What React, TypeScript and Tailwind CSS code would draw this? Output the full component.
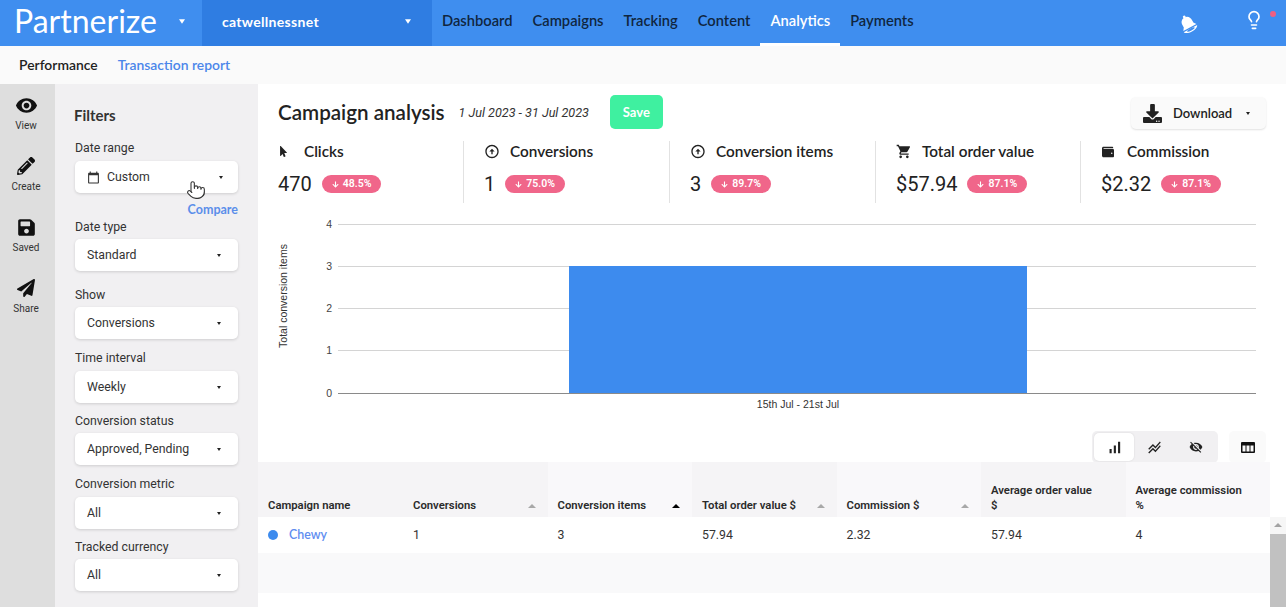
import React from 'react';
import { FaArrowDown, FaDownload, FaMousePointer, FaPaperPlane, FaPencilAlt, FaSave, FaWallet } from 'react-icons/fa';
import {
  MdCalendarToday,
  MdOutlineArrowCircleUp,
  MdShoppingCart,
  MdSignalCellularAlt,
  MdStackedLineChart,
  MdVisibility,
  MdVisibilityOff,
} from 'react-icons/md';
import { Lightbulb, Pointer } from 'lucide-react';

const quick = "font-['Lato',sans-serif]";

const navItems = ['Dashboard', 'Campaigns', 'Tracking', 'Content', 'Analytics', 'Payments'];

const Caret = ({ className = '' }: { className?: string }) => (
  <span className={`inline-block w-0 h-0 border-x-[2.5px] border-x-transparent border-t-[3.5px] border-t-current ${className}`} />
);

const railItems = [
  { label: 'View', icon: <MdVisibility size={23} /> },
  { label: 'Create', icon: <FaPencilAlt size={18} /> },
  { label: 'Saved', icon: <FaSave size={19} /> },
  { label: 'Share', icon: <FaPaperPlane size={18} /> },
];

const filters = [
  { label: 'Date type', value: 'Standard', wrap: '-mt-px', box: 'mt-[2px]' },
  { label: 'Show', value: 'Conversions', wrap: 'mt-[14px]', box: 'mt-[2px]' },
  { label: 'Time interval', value: 'Weekly', wrap: 'mt-[9px]', box: 'mt-[3px]' },
  { label: 'Conversion status', value: 'Approved, Pending', wrap: 'mt-[8px]', box: 'mt-[2px]' },
  { label: 'Conversion metric', value: 'All', wrap: 'mt-[9px]', box: 'mt-[3px]' },
  { label: 'Tracked currency', value: 'All', wrap: 'mt-[8px]', box: 'mt-[2px]' },
];

const stats = [
  { title: 'Clicks', value: '470', delta: '48.5%', icon: <FaMousePointer size={11} />, cell: 'w-[186px] pr-0', gap: 'gap-[15px]', iconW: 'w-[11px]' },
  { title: 'Conversions', value: '1', delta: '75.0%', icon: <MdOutlineArrowCircleUp size={17} />, cell: 'w-[206px] pl-[20px]', gap: 'gap-[10px]', iconW: 'w-[16px]' },
  { title: 'Conversion items', value: '3', delta: '89.7%', icon: <MdOutlineArrowCircleUp size={17} />, cell: 'w-[206px] pl-[20px]', gap: 'gap-[10px]', iconW: 'w-[16px]' },
  { title: 'Total order value', value: '$57.94', delta: '87.1%', icon: <MdShoppingCart size={17} />, cell: 'w-[205px] pl-[20px]', gap: 'gap-[10px]', iconW: 'w-[16px]' },
  { title: 'Commission', value: '$2.32', delta: '87.1%', icon: <FaWallet size={12} />, cell: 'w-[185px] pl-[20px] border-r-0', gap: 'gap-[12px]', iconW: 'w-[14px]' },
];

const columns = [
  { name: 'Conversions', bg: 'bg-[#f5f4f6]', sort: 'text-[#a8a8a8]', pad: 'pr-[10px]' },
  { name: 'Conversion items', bg: 'bg-[#f9f8fa]', sort: 'text-black', pad: 'pr-[10px]' },
  { name: 'Total order value $', bg: 'bg-[#f5f4f6]', sort: 'text-[#a8a8a8]', pad: 'pr-[10px]' },
  { name: 'Commission $', bg: 'bg-[#f9f8fa]', sort: 'text-[#a8a8a8]', pad: 'pr-[10px]' },
  { name: 'Average order value $', bg: 'bg-[#f5f4f6]', sort: '', pad: 'pr-[30px]' },
  { name: 'Average commission %', bg: 'bg-[#f9f8fa]', sort: '', pad: 'pr-[20px]' },
];

const rowValues = ['1', '3', '57.94', '2.32', '57.94', '4'];

const Select = ({ value, icon, caret = 'mr-[2px]' }: { value: string; icon?: React.ReactNode; caret?: string }) => (
  <div className="flex items-center h-[32px] w-[163px] rounded-[5px] bg-white pl-[12px] pr-[15px] text-[12.3px] text-[#333] shadow-[0_1px_3px_rgba(0,0,0,0.15)]">
    {icon}
    <span className="flex-1">{value}</span>
    <Caret className={`text-[#222] ${caret}`} />
  </div>
);

const TableIcon = () => (
  <svg width="14" height="11" viewBox="0 0 14 11">
    <rect x="0" y="0" width="14" height="11" rx="1" fill="#111" />
    <rect x="1.5" y="3.5" width="3" height="6" fill="#fafafa" />
    <rect x="5.5" y="3.5" width="3" height="6" fill="#fafafa" />
    <rect x="9.5" y="3.5" width="3" height="6" fill="#fafafa" />
  </svg>
);

// sino inclinado, com o aro separado embaixo
const BellIcon = () => (
  <svg width="20" height="20" viewBox="0 0 20 20" fill="white" className="mr-[46px] mt-[2px]">
    <g transform="rotate(-28 10 10)">
      <circle cx="10" cy="2" r="1.4" />
      <path d="M10 2.5c-3.6 0-5.4 2.7-5.4 5.8v2.9L2.6 14h14.8l-2-2.8V8.3c0-3.1-1.8-5.8-5.4-5.8z" />
      <path d="M2.4 15.2h15.2c-.5 1.9-3.6 3.3-7.6 3.3s-7.1-1.4-7.6-3.3z" />
      <ellipse cx="10" cy="16.2" rx="4.2" ry="1.1" fill="#3f8eef" />
    </g>
  </svg>
);

const Chart = () => {
  const ys = [
    { label: '4', y: 224 },
    { label: '3', y: 266 },
    { label: '2', y: 308 },
    { label: '1', y: 350 },
    { label: '0', y: 393 },
  ];
  return (
    <svg width="1028" height="200" viewBox="258 215 1028 200" className="block font-['Liberation_Sans',sans-serif]">
      {ys.map((t) => (
        <g key={t.label}>
          <line x1="338" x2="1256" y1={t.y + 0.5} y2={t.y + 0.5} stroke={t.label === '0' ? '#8a8a8a' : '#d4d4d4'} />
          <text x="332" y={t.y + 4} textAnchor="end" fontSize="10.5" fill="#444">{t.label}</text>
        </g>
      ))}
      <rect x="569" y="266" width="458" height="127" fill="#3d8bee" />
      <text x="798" y="408" textAnchor="middle" fontSize="10.5" fill="#333">15th Jul - 21st Jul</text>
      <text transform="translate(287 296) rotate(-90)" textAnchor="middle" fontSize="10.5" fill="#333">Total conversion items</text>
    </svg>
  );
};

export default function App() {
  return (
    <div className="h-[607px] w-[1286px] overflow-hidden bg-white font-['Roboto',sans-serif] text-[#222]">
      {/* Barra superior */}
      <header className={`flex h-[46px] bg-[#3f8eef] text-white ${quick}`}>
        <div className="flex w-[202px] items-center pb-[4px] pl-[14px]">
          <span className="text-[32px] font-normal leading-none">Partnerize</span>
          <Caret className="ml-auto mr-[18px] scale-150" />
        </div>
        <div className="flex w-[230px] items-center bg-[#2f7de2] pb-[4px] pl-[20px] pr-[22px] text-[14px] font-bold tracking-[0.3px]">
          <span className="flex-1">catwellnessnet</span>
          <Caret className="scale-150" />
        </div>
        <nav className="flex text-[14.7px] font-semibold">
          {navItems.map((n) => (
            <div
              key={n}
              className={`flex items-center px-[10px] ${n === 'Analytics' ? 'border-b-[3px] border-white pb-[2px] text-white' : 'pb-[5px] text-[#10263f]'}`}
            >
              {n}
            </div>
          ))}
        </nav>
        <div className="ml-auto flex items-center pr-[16px]">
          <BellIcon />
          <div className="relative mb-[6px] mr-[6px]">
            <Lightbulb size={20} />
            <span className="absolute -right-[12px] top-[1px] h-[6px] w-[6px] rounded-full bg-[#ef5f82]" />
          </div>
        </div>
      </header>

      {/* Sub navegação */}
      <div className={`flex h-[38px] items-center gap-[20px] bg-[#fafafa] pl-[19px] text-[13.9px] font-semibold ${quick}`}>
        <span className="text-[#222]">Performance</span>
        <span className="text-[#4b86ea]">Transaction report</span>
      </div>

      <div className="flex h-[523px]">
        {/* Trilho lateral */}
        <aside className="w-[55px] shrink-0 bg-[#dedede] pt-[9px]">
          <div className="flex flex-col items-center gap-[21px] pr-[3px]">
            {railItems.map((r) => (
              <div key={r.label} className="flex h-[40px] flex-col items-center justify-between text-[10px] text-[#333]">
                <span className="flex h-[24px] items-center text-[#111]">{r.icon}</span>
                <span>{r.label}</span>
              </div>
            ))}
          </div>
        </aside>

        {/* Filtros */}
        <aside className="w-[203px] shrink-0 bg-[#f1f0f2] pl-[20px] pt-[22px] text-[12.3px] text-[#333]">
          <div className={`-ml-px text-[15px] font-bold leading-[18px] ${quick}`}>Filters</div>
          <div className="mt-[14px] leading-[20px]">Date range</div>
          <div className="mt-[3px]">
            <Select value="Custom" caret="" icon={<MdCalendarToday size={13} className="mr-[7px]" />} />
          </div>
          <div className="relative w-[163px]">
            <div className={`mt-[9px] text-right text-[12.5px] font-bold leading-[16px] text-[#5b8eea] ${quick}`}>Compare</div>
            <Pointer size={20} fill="white" strokeWidth={1.3} className="absolute left-[111px] -top-[22px] text-[#333]" />
          </div>
          {filters.map((f) => (
            <div key={f.label} className={f.wrap}>
              <div className="leading-[20px]">{f.label}</div>
              <div className={f.box}>
                <Select value={f.value} />
              </div>
            </div>
          ))}
        </aside>

        {/* Conteúdo */}
        <main className="relative flex-1 min-w-0">
          <div className="flex h-[57px] items-start pl-[20px] pr-[20px] pt-[11px]">
            <h1 className={`mt-[4px] text-[20.6px] font-semibold leading-[26px] ${quick}`}>Campaign analysis</h1>
            <span className="ml-[14px] mt-[9px] text-[12.6px] italic text-[#333]">1 Jul 2023 - 31 Jul 2023</span>
            <button className={`ml-[21px] h-[34px] w-[53px] rounded-[5px] bg-[#3ff0a0] pt-[2px] text-[13px] font-bold text-white ${quick}`}>Save</button>
            <button className={`ml-auto mt-[2px] flex h-[32px] w-[135px] items-center rounded-[5px] bg-[#fafafa] pl-[12px] pr-[16px] pt-[1px] text-[13px] font-semibold shadow-[0_1px_2px_rgba(0,0,0,0.12)] ${quick}`}>
              <FaDownload size={19} className="text-[#222]" />
              <span className="ml-[11px] flex-1 text-left">Download</span>
              <Caret />
            </button>
          </div>

          <div className="flex h-[62px] pl-[20px]">
            {stats.map((s) => (
              <div key={s.title} className={`border-r border-[#e2e2e2] ${s.cell}`}>
                <div className={`flex h-[21px] items-center ${s.gap} ${quick} text-[15.3px] font-semibold`}>
                  <span className={`flex justify-center ${s.iconW}`}>{s.icon}</span>
                  <span>{s.title}</span>
                </div>
                <div className="mt-[10px] flex items-center gap-[10px]">
                  <span className="text-[20px] leading-[24px] text-[#222]">{s.value}</span>
                  <span className="flex h-[18px] items-center gap-[4px] rounded-full bg-[#f0668a] px-[10px] text-[10.5px] font-semibold text-white">
                    <FaArrowDown size={7} />
                    {s.delta}
                  </span>
                </div>
              </div>
            ))}
          </div>

          <div className="mt-[12px]">
            <Chart />
          </div>

          {/* Controles do gráfico */}
          <div className="flex h-[47px] items-start justify-end pr-[20px]">
            <div className="mt-[16px] flex h-[32px] items-center rounded-[5px] bg-[#f1f0f2] p-[2px]">
              <div className="flex h-[28px] w-[40px] items-center justify-center rounded-[5px] bg-white shadow-[0_0_2px_rgba(0,0,0,0.12)]">
                <MdSignalCellularAlt size={17} />
              </div>
              <div className="flex w-[41px] justify-center"><MdStackedLineChart size={15} /></div>
              <div className="flex w-[41px] justify-center"><MdVisibilityOff size={14} /></div>
            </div>
            <div className="ml-[11px] mt-[16px] flex h-[32px] w-[37px] items-center justify-center rounded-[5px] bg-[#fafafa]">
              <TableIcon />
            </div>
          </div>

          {/* Tabela */}
          <div className="relative">
            <div className="flex h-[55px] text-[11.3px] font-semibold leading-[15px] text-[#2a2a2a]">
              <div className="flex w-[145px] items-end bg-[#f5f4f6] pb-[4px] pl-[10px]">
                <span>Campaign name</span>
              </div>
              {columns.map((c) => (
                <div key={c.name} className={`flex w-[144.5px] items-end pb-[4px] pl-[10px] ${c.pad} ${c.bg}`}>
                  <span className="flex-1">{c.name}</span>
                  {c.sort && <span className={`mb-[5px] mr-[2px] h-0 w-0 border-x-[4px] border-b-[4px] border-x-transparent border-b-current ${c.sort}`} />}
                </div>
              ))}
            </div>
            <div className="flex h-[36px] items-center pt-[1px] text-[12.3px] text-[#333]">
              <div className="flex w-[145px] items-center pl-[10px]">
                <span className="h-[10px] w-[10px] rounded-full bg-[#3d8bee]" />
                <span className={`ml-[11px] mb-[1px] text-[12.4px] font-semibold text-[#5f8df0] ${quick}`}>Chewy</span>
              </div>
              {rowValues.map((v, i) => (
                <div key={i} className="w-[144.5px] pl-[10px]">{v}</div>
              ))}
            </div>
            <div className="h-[40px] bg-[#f9f9fa]" />

            {/* Barra de rolagem */}
            <div className="absolute right-0 top-[55px] flex h-[90px] w-[16px] flex-col items-center bg-[#f6f6f6]">
              <span className="mt-[6px] h-0 w-0 border-x-[4px] border-b-[4px] border-x-transparent border-b-[#a3a3a3]" />
              <div className="mt-[7px] h-[90px] w-full bg-[#c1c1c1]" />
            </div>
          </div>
        </main>
      </div>
    </div>
  );
}
